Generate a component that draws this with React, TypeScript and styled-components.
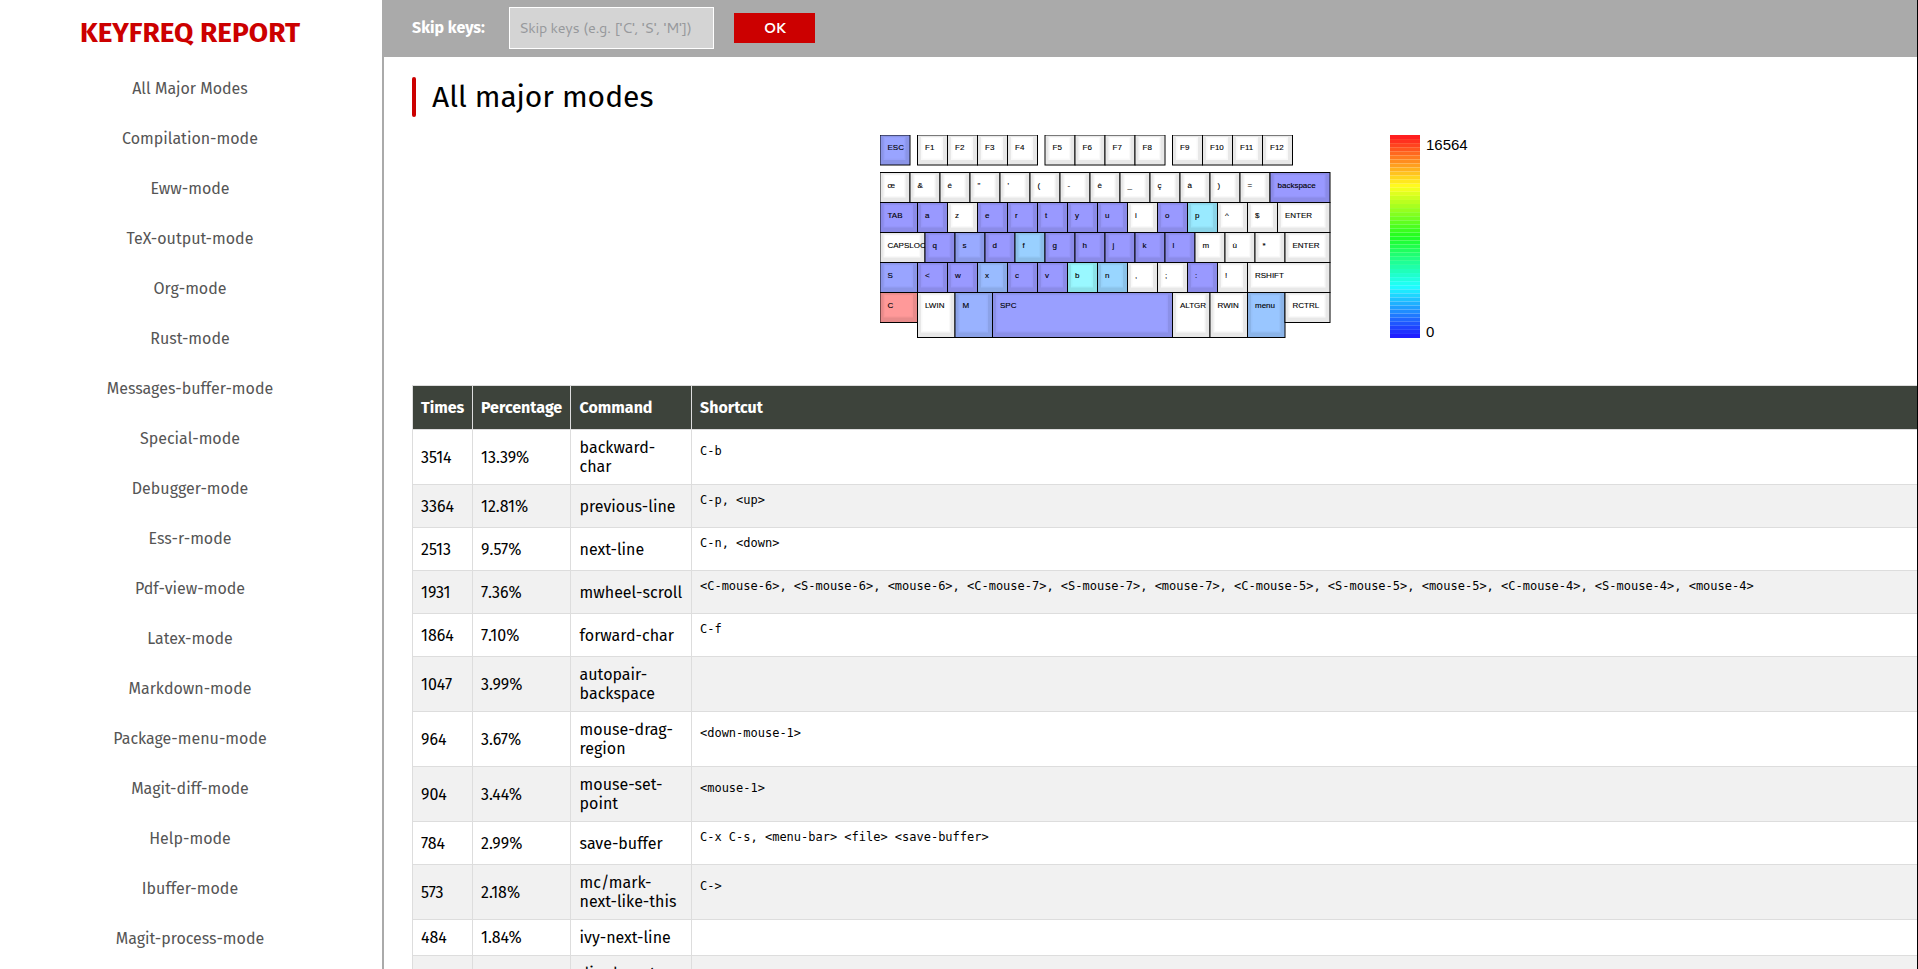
import React from 'react';
import styled, { createGlobalStyle } from 'styled-components';

const SANS = '"Fira Sans", "Noto Sans", "Liberation Sans", sans-serif';
const CONTROL = 'Cantarell, "Noto Sans", sans-serif';

const GlobalStyle = createGlobalStyle`
  * { box-sizing: border-box; }
  html, body { margin: 0; height: 969px; overflow: hidden; background: #fff; }
  body { font-family: ${SANS}; font-size: 16px; color: #000; }
`;

const Page = styled.div`
  display: flex;
  width: 100%;
  height: 969px;
  overflow: hidden;
  border-right: 1px solid #000;
`;

const Sidebar = styled.aside`
  flex: none;
  width: 384px;
  height: 969px;
  overflow: hidden;
  padding-right: 2px;
  border-right: 2px solid #aaa;
  text-align: center;
`;

const Brand = styled.h1`
  margin: 0;
  padding-top: 13px;
  height: 64px;
  font-size: 28px;
  line-height: 40px;
  font-weight: 700;
  color: #c00;
  white-space: nowrap;
`;

const NavItem = styled.a`
  display: block;
  height: 50px;
  line-height: 50px;
  font-size: 16px;
  color: #555;
`;

const Main = styled.main`
  flex: 1;
  min-width: 0;
  overflow: hidden;
`;

const Toolbar = styled.form`
  display: flex;
  align-items: center;
  height: 57px;
  padding: 0 0 2px 28px;
  background: #aaa;
`;

const ToolLabel = styled.label`
  width: 97px;
  font-size: 16px;
  font-weight: 700;
  color: #fff;
`;

const SkipInput = styled.input`
  width: 205px;
  height: 42px;
  padding: 0 9px 1px;
  border: 1px solid #fff;
  border-radius: 0;
  background: #d4d4d4;
  font: 14.5px ${CONTROL};
  letter-spacing: -0.33px;
  &::placeholder { color: #97999c; opacity: 1; }
`;

const OkButton = styled.button`
  width: 81px;
  height: 30px;
  margin-left: 20px;
  padding: 1px 0 0;
  border: 0;
  background: #c00;
  color: #fff;
  font: 700 14px ${CONTROL};
  letter-spacing: -0.8px;
`;

const Content = styled.div`
  padding: 20px 0 0 28px;
`;

const Heading = styled.h2`
  display: flex;
  align-items: center;
  height: 40px;
  margin: 0 0 18px;
  font-size: 30px;
  font-weight: 400;
  &::before {
    content: '';
    width: 4px;
    height: 40px;
    margin-right: 16px;
    border-radius: 2px;
    background: #c00;
  }
`;

const Heat = styled.svg`
  display: block;
  margin-left: 468px;
  font-family: "Liberation Sans", Arial, sans-serif;
`;

const Table = styled.table`
  width: 1540px;
  margin-top: 46px;
  border-collapse: collapse;
  table-layout: fixed;
`;

const HeadCell = styled.th`
  padding: 0 8px 1px;
  border: 1px solid #ddd;
  background: #3d433b;
  color: #fff;
  font-size: 16px;
  line-height: 19px;
  text-align: left;
  white-space: nowrap;
  &:nth-child(3) { padding-left: 8.6px; }
`;

const Row = styled.tr<{ $h: number; $alt?: boolean }>`
  height: ${p => p.$h}px;
  background: ${p => (p.$alt ? '#f1f1f1' : '#fff')};
`;

const Cell = styled.td`
  padding: 0 8px;
  border: 1px solid #ddd;
  font-size: 16px;
  line-height: 19px;
  white-space: pre;
  &:nth-child(3) { padding-left: 8.6px; }
`;

const Keys = styled.pre`
  margin: 0;
  padding-bottom: 11px;
  font: 12px/15px "DejaVu Sans Mono", monospace;
  letter-spacing: -0.008px;
`;

const modes = [
  'All Major Modes', 'Compilation-mode', 'Eww-mode', 'TeX-output-mode', 'Org-mode', 'Rust-mode',
  'Messages-buffer-mode', 'Special-mode', 'Debugger-mode', 'Ess-r-mode', 'Pdf-view-mode',
  'Latex-mode', 'Markdown-mode', 'Package-menu-mode', 'Magit-diff-mode', 'Help-mode',
  'Ibuffer-mode', 'Magit-process-mode',
];

type CommandStat = { n: string; pct: string; cmd: string; keys: string; h: number };
const rows: CommandStat[] = [
  { n: '3514', pct: '13.39%', cmd: 'backward-\nchar', keys: 'C-b', h: 55 },
  { n: '3364', pct: '12.81%', cmd: 'previous-line', keys: 'C-p, <up>', h: 43 },
  { n: '2513', pct: '9.57%', cmd: 'next-line', keys: 'C-n, <down>', h: 43 },
  { n: '1931', pct: '7.36%', cmd: 'mwheel-scroll', keys: '<C-mouse-6>, <S-mouse-6>, <mouse-6>, <C-mouse-7>, <S-mouse-7>, <mouse-7>, <C-mouse-5>, <S-mouse-5>, <mouse-5>, <C-mouse-4>, <S-mouse-4>, <mouse-4>', h: 43 },
  { n: '1864', pct: '7.10%', cmd: 'forward-char', keys: 'C-f', h: 43 },
  { n: '1047', pct: '3.99%', cmd: 'autopair-\nbackspace', keys: '', h: 55 },
  { n: '964', pct: '3.67%', cmd: 'mouse-drag-\nregion', keys: '<down-mouse-1>', h: 55 },
  { n: '904', pct: '3.44%', cmd: 'mouse-set-\npoint', keys: '<mouse-1>', h: 55 },
  { n: '784', pct: '2.99%', cmd: 'save-buffer', keys: 'C-x C-s, <menu-bar> <file> <save-buffer>', h: 43 },
  { n: '573', pct: '2.18%', cmd: 'mc/mark-\nnext-like-this', keys: 'C->', h: 55 },
  { n: '484', pct: '1.84%', cmd: 'ivy-next-line', keys: '', h: 36 },
  { n: '', pct: '', cmd: 'dired-next-\nline', keys: '', h: 55 },
];

type Key = [label: string, width?: number, color?: string, height?: number];
const V = '#9999ff';
const B = '#99a4ff';
const W = '#ffffff';
const keyRows: { x: number; y: number; keys: Key[] }[] = [
  { x: 0, y: 0, keys: [['ESC', 30, B]] },
  { x: 37.5, y: 0, keys: [['F1'], ['F2'], ['F3'], ['F4']] },
  { x: 165, y: 0, keys: [['F5'], ['F6'], ['F7'], ['F8']] },
  { x: 292.5, y: 0, keys: [['F9'], ['F10'], ['F11'], ['F12']] },
  { x: 0, y: 37.5, keys: [['œ'], ['&'], ['é'], ['"'], ["'"], ['('], ['-'], ['è'], ['_'], ['ç'], ['à'], [')'], ['='], ['backspace', 60, V]] },
  { x: 0, y: 67.5, keys: [['TAB', 37.5, V], ['a', 30, V], ['z'], ['e', 30, V], ['r', 30, V], ['t', 30, V], ['y', 30, V], ['u', 30, V], ['i'], ['o', 30, V], ['p', 30, '#99eaff'], ['^'], ['$'], ['ENTER', 52.5]] },
  { x: 0, y: 97.5, keys: [['CAPSLOCK', 45], ['q', 30, V], ['s', 30, '#99aaff'], ['d', 30, V], ['f', 30, '#99d0ff'], ['g', 30, V], ['h', 30, V], ['j', 30, V], ['k', 30, V], ['l', 30, V], ['m'], ['ù'], ['*'], ['ENTER', 45]] },
  { x: 0, y: 127.5, keys: [['S', 37.5, B], ['<', 30, V], ['w', 30, V], ['x', 30, '#99bbff'], ['c', 30, V], ['v', 30, V], ['b', 30, '#99f8ff'], ['n', 30, '#99d6ff'], [','], [';'], [':', 30, V], ['!'], ['RSHIFT', 82.5]] },
  { x: 0, y: 157.5, keys: [['C', 37.5, '#ff9999'], ['LWIN', 37.5, W, 45], ['M', 37.5, '#99b2ff', 45], ['SPC', 180, '#999fff', 45], ['ALTGR', 37.5, W, 45], ['RWIN', 37.5, W, 45], ['menu', 37.5, '#99c6ff', 45], ['RCTRL', 45]] },
];

const STEPS = 50;
const BAR_H = 203;

function Keyboard() {
  return (
    <Heat width={620} height={204}>
      {keyRows.map((row, r) => {
        let x = row.x;
        return row.keys.map(([label, w = 30, color = W, h = 30], k) => {
          const left = x;
          x += w;
          return (
            <g key={`${r}-${k}`}>
              <rect x={left} y={row.y} width={w} height={h} fill={color} stroke="#000" />
              <rect x={left + 0.5} y={row.y + 0.5} width={w - 1} height={h - 1} fill="#000" fillOpacity={0.09} />
              <rect x={left + 3.5} y={row.y + 2} width={w - 8} height={h - 7} fill={color} fillOpacity={0.75} />
              <rect x={left + 5} y={row.y + 3} width={w - 11} height={h - 9.5} fill={color} />
              <text x={left + 7.5} y={row.y + 15} fontSize={8} stroke="#000" strokeWidth={0.12}>{label}</text>
            </g>
          );
        });
      })}
      {Array.from({ length: STEPS }, (_, i) => (
        <rect
          key={i}
          x={510}
          y={(i * BAR_H) / STEPS}
          width={30}
          height={BAR_H / STEPS}
          fill={`hsl(${(i * 240) / (STEPS - 1)}, 100%, 56%)`}
        />
      ))}
      <text x={546} y={15} fontSize={15}>16564</text>
      <text x={546} y={202} fontSize={15}>0</text>
    </Heat>
  );
}

export default function App() {
  return (
    <Page>
      <GlobalStyle />
      <Sidebar>
        <Brand>KEYFREQ REPORT</Brand>
        <nav>{modes.map(m => <NavItem key={m}>{m}</NavItem>)}</nav>
      </Sidebar>
      <Main>
        <Toolbar>
          <ToolLabel>Skip keys:</ToolLabel>
          <SkipInput placeholder="Skip keys (e.g. ['C', 'S', 'M'])" />
          <OkButton type="button">OK</OkButton>
        </Toolbar>
        <Content>
          <Heading>All major modes</Heading>
          <Keyboard />
          <Table>
            <colgroup>
              <col width={60} />
              <col width={98} />
              <col width={121} />
              <col />
            </colgroup>
            <thead>
              <Row $h={44}>
                <HeadCell>Times</HeadCell>
                <HeadCell>Percentage</HeadCell>
                <HeadCell>Command</HeadCell>
                <HeadCell>Shortcut</HeadCell>
              </Row>
            </thead>
            <tbody>
              {rows.map((r, i) => (
                <Row key={r.cmd} $h={r.h} $alt={i % 2 === 1}>
                  <Cell>{r.n}</Cell>
                  <Cell>{r.pct}</Cell>
                  <Cell>{r.cmd}</Cell>
                  <Cell>{r.keys && <Keys>{r.keys}</Keys>}</Cell>
                </Row>
              ))}
            </tbody>
          </Table>
        </Content>
      </Main>
    </Page>
  );
}
